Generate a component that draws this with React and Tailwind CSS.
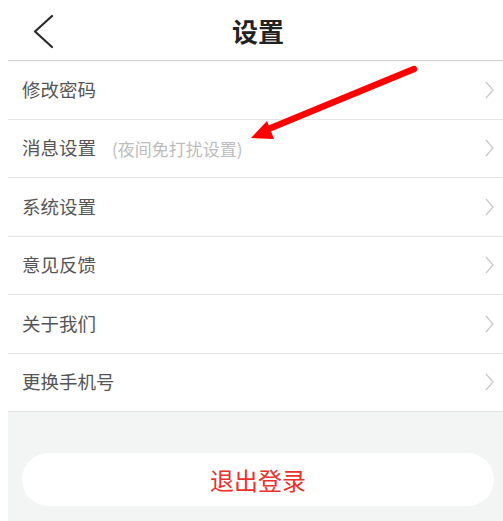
export default function App() {
  const rows = [
    { label: "修改密码" },
    { label: "消息设置", hint: "(夜间免打扰设置)" },
    { label: "系统设置" },
    { label: "意见反馈" },
    { label: "关于我们" },
    { label: "更换手机号" },
  ];

  return (
    <div
      className="relative min-h-[521px] bg-white pl-2"
      style={{ fontFamily: '"Noto Sans CJK SC", "Noto Sans", sans-serif' }}
    >
      <div className="flex min-h-[521px] flex-col">
        <header className="relative flex h-[61px] items-center justify-center border-b border-[#cfcfcf] bg-white">
          <svg
            className="absolute left-[24px] top-[15px]"
            width="22"
            height="34"
            viewBox="0 0 22 34"
            fill="none"
          >
            <polyline
              points="20,1 3,16.5 20,32"
              stroke="#2a2a2a"
              strokeWidth="2.2"
              strokeLinecap="round"
              strokeLinejoin="round"
            />
          </svg>
          <h1 className="ml-[5px] text-[26px] font-bold text-[#222]">设置</h1>
        </header>

        <ul className="bg-white">
          {rows.map((r) => (
            <li
              key={r.label}
              className="flex h-[58.5px] items-center border-b border-[#e6e6e6] pl-[14px] pr-[9px]"
            >
              <span className="text-[18.5px] text-[#555]">{r.label}</span>
              {r.hint && (
                <span className="ml-[16px] text-[17px] text-[#bdbdbd]">{r.hint}</span>
              )}
              <svg className="ml-auto" width="9" height="18" viewBox="0 0 9 18" fill="none">
                <polyline points="1,1 8,9 1,17" stroke="#c8c8c8" strokeWidth="1.2" />
              </svg>
            </li>
          ))}
        </ul>

        <div className="flex-1 bg-[#f3f4f4] pt-[41px]">
          <button className="ml-[14px] mr-[9px] flex h-[53px] w-[calc(100%-23px)] items-center justify-center rounded-full bg-white text-[24px] text-[#e8322a]">
            退出登录
          </button>
        </div>
      </div>

      <svg
        className="pointer-events-none absolute left-0 top-0"
        width="503"
        height="521"
        viewBox="0 0 503 521"
      >
        <line
          x1="414"
          y1="69"
          x2="266"
          y2="130"
          stroke="#ff0000"
          strokeWidth="6.5"
          strokeLinecap="round"
        />
        <polygon points="251,138 267,121 274,139" fill="#ff0000" />
      </svg>
    </div>
  );
}
